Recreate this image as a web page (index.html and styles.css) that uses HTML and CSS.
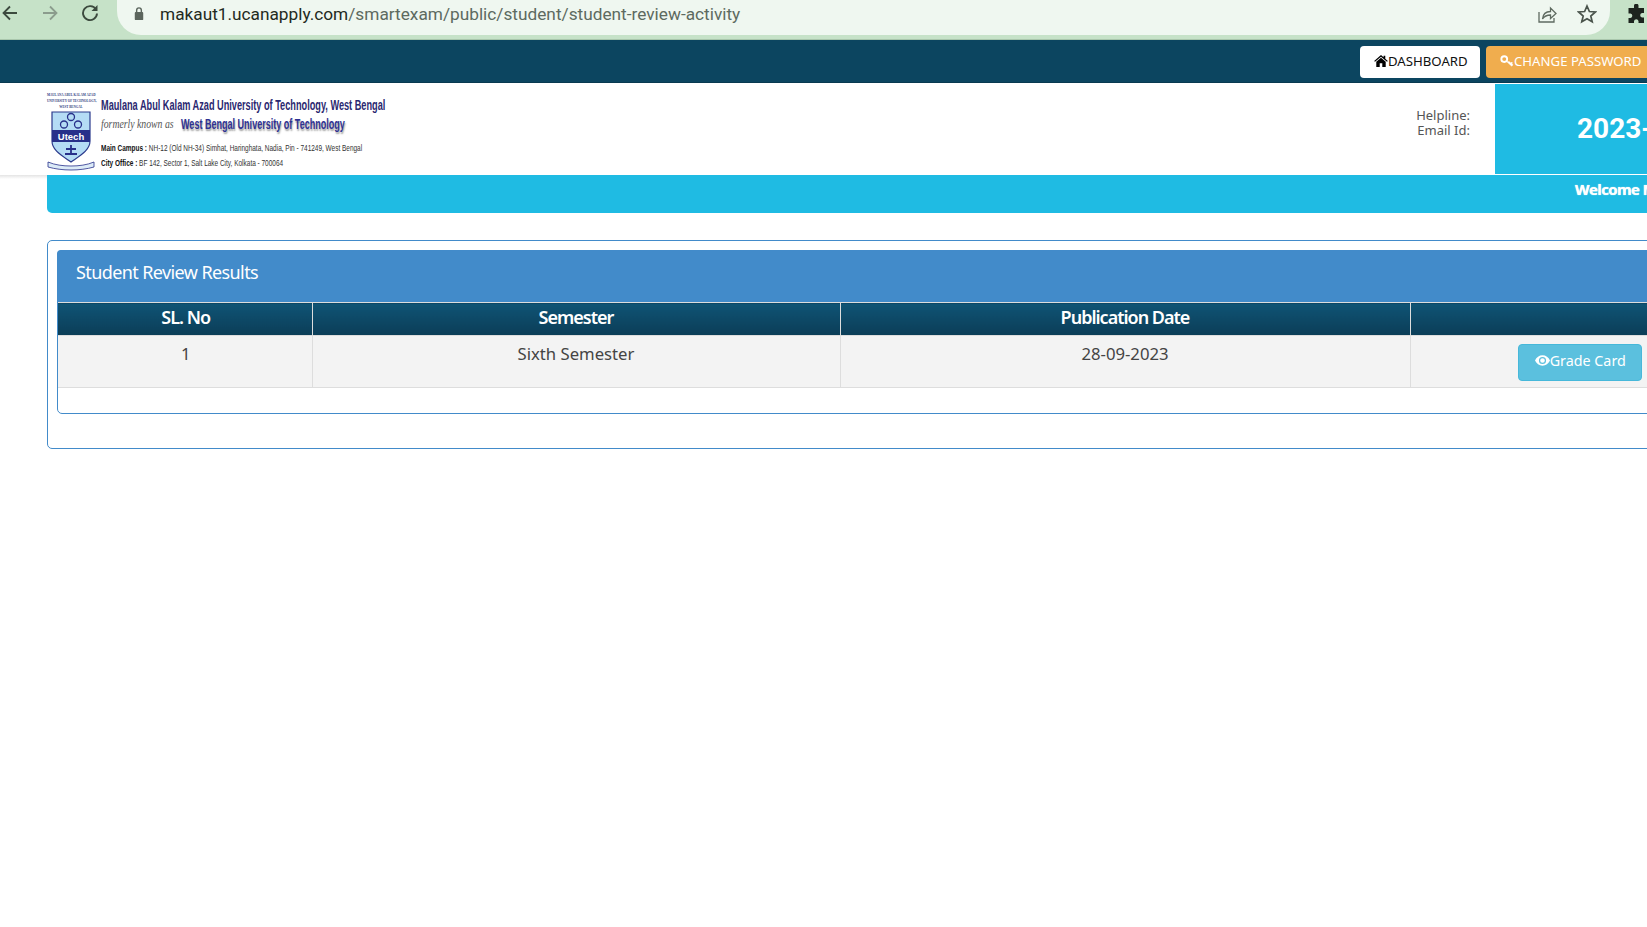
FILE: index.html
```html
<!DOCTYPE html>
<html lang="en">
<head>
<meta charset="utf-8">
<title>Student Review Results</title>
<link rel="stylesheet" href="styles.css">
</head>
<body>
<div class="page">
  <div class="chrome">
    <div class="nav-icons">
      <svg class="nav-icon" viewBox="0 0 18 18"><path d="M16 9H3M9 2.500 2.500 9 9 15.500" fill="none" stroke="#3c4a3e" stroke-width="1.800"/></svg>
      <svg class="nav-icon" viewBox="0 0 18 18"><path d="M2 9h13M9 2.500 15.500 9 9 15.500" fill="none" stroke="#8b9c8d" stroke-width="1.800"/></svg>
      <svg class="nav-icon" viewBox="0 0 18 18"><path d="M15 5.500A7 7 0 1 0 16 9.500" fill="none" stroke="#3c4a3e" stroke-width="1.900"/><path d="M16.500 1v6h-6z" fill="#3c4a3e"/></svg>
    </div>
    <div class="omnibox">
      <svg class="lock" viewBox="0 0 12 16"><path d="M3.500 7V4.500a2.500 2.500 0 0 1 5 0V7" fill="none" stroke="#5b655d" stroke-width="1.500"/><rect x="1.500" y="6.500" width="9" height="8.500" rx="1" fill="#5b655d"/></svg>
      <span class="url"><span class="url-host">makaut1.ucanapply.com</span>/smartexam/public/student/student-review-activity</span>
      <svg class="omni-icon share" viewBox="0 0 20 20"><path d="M2 8v10h15v-4" fill="none" stroke="#5f6b61" stroke-width="1.300"/><path d="M5.500 15c.5-5 4-7.500 8-7.500V4l5.500 5.500-5.500 5V11c-3.500 0-6 1-8 4z" fill="none" stroke="#5f6b61" stroke-width="1.300"/></svg>
      <svg class="omni-icon star" viewBox="0 0 20 20"><path d="m10 2 2.400 5.500 6 .5-4.600 4 1.400 5.800L10 14.800 4.800 17.800 6.200 12 1.600 8l6-.5z" fill="none" stroke="#4a544c" stroke-width="1.700"/></svg>
    </div>
    <svg class="puzzle" viewBox="0 0 20 20"><path d="M7 1.500a2.300 2.300 0 0 1 4.500 0V4H17v5h-2a2.300 2.300 0 0 0 0 4.500h2V19h-5.500v-2a2.300 2.300 0 0 0-4.500 0v2H1.500v-5H3.500a2.300 2.300 0 0 0 0-4.500H1.500V4H7z" fill="#1d241e"/></svg>
  </div>

  <div class="topbar">
    <a class="top-btn btn-white">
      <svg class="btn-icon" viewBox="0 0 16 14"><path d="M8 0 0 7l1 1 7-6 7 6 1-1-3-2.600V1h-2v1.700z" fill="#000"/><path d="M8 3.200 2.500 8v6H6.500V9.500h3V14h4V8z" fill="#000"/></svg><span>DASHBOARD</span>
    </a>
    <a class="top-btn btn-orange">
      <svg class="btn-icon" viewBox="0 0 16 14"><circle cx="4.800" cy="4.800" r="3.400" fill="none" stroke="#fff" stroke-width="2.200"/><path d="M7.500 7.500l6 5.500 1.500-1.500-1.500-1.200 1-1-1-1-1 1-1.500-1.300z" fill="#fff" stroke="#fff" stroke-width=".6"/></svg><span>CHANGE PASSWORD</span>
    </a>
  </div>

  <header class="masthead">
    <div class="brand">
      <div class="crest">
        <div class="crest-name">MAULANA ABUL KALAM AZAD<br>UNIVERSITY OF TECHNOLOGY,<br>WEST BENGAL</div>
        <svg class="crest-svg" viewBox="0 0 48 60">
          <path d="M5 1h38v29c0 9-9 14-19 21C14 44 5 39 5 30z" fill="#b4dcf5" stroke="#2b3a8c" stroke-width="1.200"/>
          <rect x="5" y="19" width="38" height="12" fill="#27308a"/>
          <circle cx="24" cy="6" r="3.500" fill="none" stroke="#27308a" stroke-width="1.300"/>
          <circle cx="17" cy="13.500" r="3.500" fill="none" stroke="#27308a" stroke-width="1.300"/>
          <circle cx="31" cy="13.500" r="3.500" fill="none" stroke="#27308a" stroke-width="1.300"/>
          <text x="24" y="28.500" class="crest-utech" text-anchor="middle">Utech</text>
          <path d="M24 34v9M19 38h10M18 43h12" stroke="#27308a" stroke-width="1.800" fill="none"/>
          <path d="M1 51c7 3 15 4 23 4s16-1 23-4v5c-7 2-15 3-23 3s-16-1-23-3z" fill="#dcebf7" stroke="#27308a" stroke-width=".8"/>
        </svg>
      </div>
      <div class="brand-text">
        <div class="brand-title">Maulana Abul Kalam Azad University of Technology, West Bengal</div>
        <div class="brand-sub"><span class="formerly">formerly known as</span><span class="wbut">West Bengal University of Technology</span></div>
        <div class="brand-addr"><b>Main Campus :</b> NH-12 (Old NH-34) Simhat, Haringhata, Nadia, Pin - 741249, West Bengal</div>
        <div class="brand-addr"><b>City Office :</b> BF 142, Sector 1, Salt Lake City, Kolkata - 700064</div>
      </div>
    </div>
    <div class="contact">
      <div>Helpline:</div>
      <div>Email Id:</div>
    </div>
    <div class="session">2023-24</div>
  </header>

  <div class="welcome-row">
    <div class="welcome">Welcome M</div>
  </div>

  <main class="outer-panel">
    <section class="inner-panel">
      <h1 class="panel-heading">Student Review Results</h1>
      <table class="results">
        <thead>
          <tr>
            <th class="col-sl">SL. No</th>
            <th class="col-sem">Semester</th>
            <th class="col-date">Publication Date</th>
            <th class="col-act"></th>
          </tr>
        </thead>
        <tbody>
          <tr>
            <td>1</td>
            <td>Sixth Semester</td>
            <td>28-09-2023</td>
            <td class="cell-act">
              <a class="grade-btn"><svg class="eye" viewBox="0 0 16 11"><path d="M8 0C4.500 0 1.500 2.200 0 5.500 1.500 8.800 4.500 11 8 11s6.500-2.200 8-5.500C14.500 2.200 11.500 0 8 0zm0 9.300a3.800 3.800 0 1 1 0-7.600 3.800 3.800 0 0 1 0 7.600zM8 3a2.500 2.500 0 1 0 0 5 2.500 2.500 0 0 0 0-5z" fill="#fff"/></svg>Grade Card</a>
            </td>
          </tr>
        </tbody>
      </table>
    </section>
  </main>
</div>
</body>
</html>
```

FILE: styles.css
```css
* { box-sizing: border-box; }
html, body { margin: 0; padding: 0; height: 100%; overflow: hidden; background: #fff; }
body { font-family: "Noto Sans", "Open Sans", sans-serif; color: #444; }
.page { width: 1808px; }

/* browser chrome */
.chrome { display: flex; align-items: flex-start; height: 40px; background: #c6e2c8; border-bottom: 1px solid #a9c6ac; }
.nav-icons { display: flex; gap: 22px; width: 117px; padding: 4px 0 0 1px; }
.nav-icon { width: 18px; height: 18px; }
.omnibox { display: flex; align-items: center; width: 1493px; height: 35px; padding: 0 6px 8px 16px; background: #eff7f0; border-radius: 0 0 24px 24px; }
.lock { width: 12px; height: 15px; margin-right: 15px; }
.url { font-family: Roboto, "Noto Sans", sans-serif; font-size: 17.250px; color: #5d6a60; white-space: nowrap; }
.url-host { color: #1f2a22; }
.omni-icon { width: 20px; height: 20px; }
.share { margin-left: auto; margin-right: 20px; }
.star { margin-right: 7px; }
.puzzle { width: 20px; height: 20px; margin: 4px 0 0 17px; }

/* dark bar */
.topbar { display: flex; gap: 6px; height: 43px; padding: 6px 0 0 1360px; background: #0c4560; border-bottom: 1px solid #093a50; }
.top-btn { display: flex; align-items: center; height: 32px; padding: 0 0 3px 14px; border-radius: 4px; font-size: 13.200px; white-space: nowrap; }
.btn-white { width: 120px; background: #fff; color: #111; }
.btn-orange { width: 171px; background: #f0ad4e; color: #fff; }
.btn-icon { flex: none; width: 14px; height: 12px; }

/* masthead */
.masthead { display: flex; height: 92px; background: #fff; }
.brand { display: flex; width: 1380px; padding: 9px 0 0 47px; gap: 6px; }
.crest { width: 48px; }
.crest-name { height: 18px; font-family: "Liberation Serif", serif; font-size: 3.200px; line-height: 6px; font-weight: 700; text-align: center; color: #35407f; white-space: nowrap; }
.crest-svg { display: block; width: 48px; height: 60px; margin-top: 1px; }
.crest-utech { font: 700 9.500px "Liberation Sans", sans-serif; fill: #fff; }
.brand-text { display: flex; flex-direction: column; padding-top: 6px; }
.brand-title, .brand-addr, .wbut, .formerly { display: block; white-space: nowrap; transform-origin: left center; }
.brand-title { height: 17px; font-family: "Liberation Sans", sans-serif; font-weight: 700; font-size: 13.800px; line-height: 16px; color: #2a2870; transform: scaleX(.665); }
.brand-sub { display: flex; align-items: center; height: 19px; }
.formerly { flex: none; width: 80px; font-family: "Liberation Serif", serif; font-style: italic; font-size: 12.500px; color: #555; transform: scaleX(.78); }
.wbut { font-family: "Liberation Sans", sans-serif; font-weight: 700; font-size: 13.800px; color: #2e3192; text-shadow: 1px 2px 2px #999; transform: scaleX(.655); }
.brand-addr { height: 15px; font-family: "Liberation Sans", sans-serif; font-size: 9.800px; line-height: 15px; color: #333; transform: scaleX(.66); }
.brand-addr:nth-child(3) { margin-top: 6px; }
.brand-addr b { color: #111; }
.contact { display: flex; flex-direction: column; width: 90px; padding-top: 25px; font-size: 13px; line-height: 15px; color: #555; text-align: right; }
.session { width: 300px; height: 90px; margin: 1px 0 0 25px; padding: 28px 0 0 82px; background: #1fbbe3; font-family: Roboto, "Liberation Sans", sans-serif; font-size: 28px; line-height: 34px; font-weight: 700; color: #fff; white-space: nowrap; }

/* welcome */
.welcome-row { padding-left: 47px; background: linear-gradient(#e4e4e4, #fff 4px); }
.welcome { height: 38px; padding: 3px 0 0 1528px; border-radius: 0 0 0 5px; background: #1fbbe3; font-family: "Open Sans", "Noto Sans", sans-serif; font-weight: 700; font-size: 15px; line-height: 22px; color: #fff; white-space: nowrap; text-shadow: 0 0 1px #fff; letter-spacing: -.6px; }

/* panels */
.outer-panel { width: 1714px; height: 209px; margin: 27px 0 0 47px; padding: 9px 10px 0 9px; border: 1px solid #428bca; border-radius: 5px; }
.inner-panel { height: 164px; border: 1px solid #428bca; border-radius: 5px; }
.panel-heading { height: 52px; margin: -1px -1px 0; padding: 0 0 0 19px; border-radius: 4px 4px 0 0; background: #428bca; font-size: 18px; line-height: 44px; font-weight: 400; letter-spacing: -.6px; color: #fff; }

/* table */
.results { width: 100%; border-collapse: collapse; table-layout: fixed; }
.results th { height: 33px; padding: 0 0 4px; border: 1px solid #ddd; border-bottom: 0; background: linear-gradient(#0f5475, #0b3d57); color: #fff; font-size: 18px; font-weight: 600; line-height: 24px; letter-spacing: -1px; }
.results td { height: 52px; padding: 5px 8px 0; vertical-align: top; border: 1px solid #ddd; background: #f3f3f3; text-align: center; font-size: 16.700px; line-height: 26px; color: #444; }
.results td:first-child, .results th:first-child { border-left: 0; padding-left: 10px; }
.results th:first-child { padding-left: 2px; }
.col-sl { width: 254px; }
.col-sem { width: 528px; }
.col-date { width: 570px; }
.results td.cell-act { padding: 8px 0 0 2px; }
.grade-btn { display: inline-flex; align-items: center; justify-content: center; width: 124px; height: 37px; padding-bottom: 4px; border: 1px solid #46b8da; border-radius: 4px; background: #5bc0de; color: #fff; font-size: 14.300px; }
.eye { flex: none; width: 15px; height: 11px; }
```
